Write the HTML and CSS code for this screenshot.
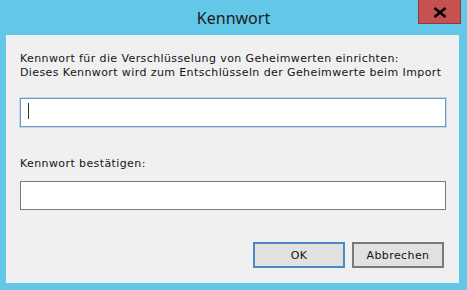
FILE: index.html
```html
<!DOCTYPE html>
<html lang="de">
<head>
<meta charset="utf-8">
<title>Kennwort</title>
<link rel="stylesheet" href="styles.css">
</head>
<body>
<div class="window">
  <div class="titlebar">
    <div class="spacer"></div>
    <div class="title">Kennwort</div>
    <div class="controls">
      <div class="close">
        <svg width="14" height="11" viewBox="0 0 14 11"><path d="M1.5 1 L12.5 10 M12.5 1 L1.5 10" stroke="#000" stroke-width="2.6" stroke-linecap="butt"/></svg>
      </div>
    </div>
  </div>
  <div class="client">
    <p class="intro">Kennwort für die Verschlüsselung von Geheimwerten einrichten:<br>Dieses Kennwort wird zum Entschlüsseln der Geheimwerte beim Import</p>
    <div class="field focused"><span class="caret"></span></div>
    <p class="label">Kennwort bestätigen:</p>
    <div class="field"></div>
    <div class="buttons">
      <div class="btn default">OK</div>
      <div class="btn">Abbrechen</div>
    </div>
  </div>
</div>
</body>
</html>
```
FILE: styles.css
```css
html, body {
  margin: 0;
  padding: 0;
}
body {
  width: 467px;
  height: 290px;
  overflow: hidden;
  background: #63c8e8;
}
.window {
  width: 467px;
  height: 290px;
  display: flex;
  flex-direction: column;
  background: #63c8e8;
}
.titlebar {
  height: 35px;
  display: grid;
  grid-template-columns: 1fr auto 1fr;
}
.title {
  font-family: "Noto Sans", sans-serif;
  font-size: 16px;
  color: #1a1a1a;
  line-height: 35px;
  padding-top: 1px;
}
.controls {
  display: flex;
  justify-content: flex-end;
  align-items: flex-start;
}
.close {
  width: 41px;
  height: 22px;
  margin-right: 6px;
  background: #c75050;
  border: 1px solid #8e3a3a;
  border-top: none;
  display: flex;
  align-items: center;
  justify-content: center;
  padding-top: 1px;
}
.close svg { display: block; }
.client {
  flex: 1;
  margin: 0 8px 7px 6px;
  background: #f0f0f0;
  padding: 17px 13px 0 14px;
  font-family: "DejaVu Sans", sans-serif;
  font-size: 11px;
  letter-spacing: 0.4px;
  color: #141414;
  display: flex;
  flex-direction: column;
}
.intro {
  margin: 0;
  line-height: 14px;
}
.label {
  margin: 30px 0 0 0;
  line-height: 14px;
}
.field {
  height: 27px;
  background: #fff;
  border: 1px solid #7a7a7a;
  margin-top: 10px;
  position: relative;
}
.field.focused {
  margin-top: 18px;
  border-color: #6f99c5;
  box-shadow: 0 0 0 1px #c4d6ea;
}
.caret {
  position: absolute;
  left: 7px;
  top: 4px;
  width: 1px;
  height: 16px;
  background: #333;
}
.label + .field {
  margin-top: 10px;
}
.buttons {
  display: flex;
  justify-content: flex-end;
  gap: 7px;
  margin-top: 32px;
  padding-right: 2px;
}
.btn {
  width: 88px;
  height: 22px;
  background: #e1e1e1;
  border: 2px solid #7a7a7a;
  display: flex;
  align-items: center;
  justify-content: center;
  font-size: 11px;
  color: #141414;
}
.btn.default {
  border-color: #4a89c4;
}
```
